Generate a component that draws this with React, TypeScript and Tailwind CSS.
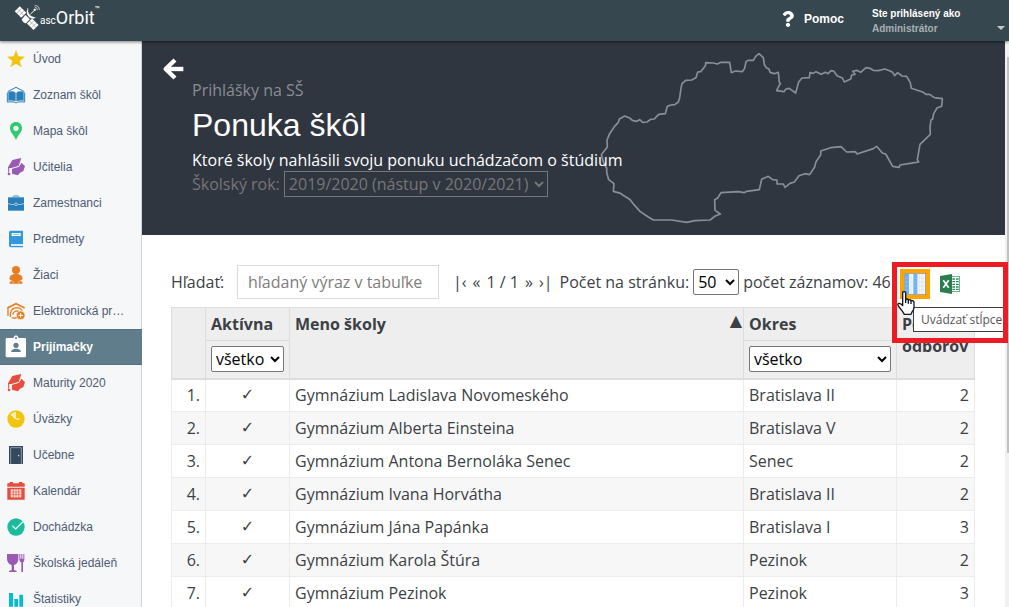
import { useState } from "react";
import type { ReactNode } from "react";
import clsx from "clsx";
import { FaQuestion } from "react-icons/fa";

interface MenuItem {
  label: string;
  icon: ReactNode;
  active?: boolean;
}

interface School {
  name: string;
  district: string;
  count: number;
}

function GradCap({ color }: { color: string }) {
  return (
    <g>
      <path d="M3 28L16 6L43 0L35 24L14 30L3 31Z" fill={color} />
      <path d="M15 32L36 26L43 14L54 24L49 39L38 45L33 52L15 47Z" fill={color} />
      <path d="M15 31L36 25L42 13" fill="none" stroke="#f5f7f9" strokeOpacity="0.7" strokeWidth="2" />
      <path d="M5 28V44" stroke={color} strokeWidth="3" />
      <circle cx="6" cy="48" r="4" fill={color} />
    </g>
  );
}

const MENU: MenuItem[] = [
  {
    label: "Úvod",
    icon: <path d="M27 0L34 19L54 20L38 33L44 52L27 41L10 52L16 33L0 20L20 19Z" fill="#f1c40f" />,
  },
  {
    label: "Zoznam škôl",
    icon: (
      <g>
        <path d="M2 17L27 4L52 17" fill="none" stroke="#2980b9" strokeWidth="3" />
        <path d="M4 18Q16 13 26 20V45Q15 42 4 44ZM28 20Q38 13 50 18V44Q39 42 28 45Z" fill="#2980b9" />
        <path d="M1 20V48Q14 47 22 48L27 51L32 48Q40 47 53 48V20" fill="none" stroke="#2980b9" strokeWidth="3" />
      </g>
    ),
  },
  {
    label: "Mapa škôl",
    icon: (
      <path
        fillRule="evenodd"
        fill="#2ecc71"
        d="M27 0C16 0 9 8 9 18C9 31 20 37 27 54C34 37 45 31 45 18C45 8 38 0 27 0ZM27 11A8 8 0 1 1 27 27A8 8 0 1 1 27 11Z"
      />
    ),
  },
  { label: "Učitelia", icon: <GradCap color="#9b59b6" /> },
  {
    label: "Zamestnanci",
    icon: (
      <g>
        <path d="M18 10Q18 6 22 6H32Q36 6 36 10" fill="none" stroke="#2980b9" strokeWidth="3" />
        <rect x="3" y="10" width="48" height="40" fill="#2980b9" />
        <path d="M3 29Q15 33 24 31M30 31Q40 33 51 29" fill="none" stroke="#d9e9f4" strokeWidth="2" />
        <circle cx="27" cy="31" r="4" fill="#2980b9" stroke="#d9e9f4" strokeWidth="2" />
      </g>
    ),
  },
  {
    label: "Predmety",
    icon: (
      <g>
        <path d="M11 2H48V42H12V48H48V52H11Q6 51 6 46V7Q6 2 11 2Z" fill="#3498db" />
        <rect x="14" y="9" width="27" height="9" fill="#fff" />
        <path d="M17 13H38" stroke="#8fc6ec" strokeWidth="3" />
        <rect x="12" y="42" width="35" height="6" fill="#d6eaf8" />
      </g>
    ),
  },
  {
    label: "Žiaci",
    icon: (
      <g fill="#e67e22">
        <circle cx="27" cy="12" r="12" />
        <path d="M10 29Q27 18 44 29L47 38Q44 44 37 43L46 48V53H8V48L17 43Q9 44 7 38Z" />
        <path d="M15 48H22M32 48H39" stroke="#f9d9ba" strokeWidth="2" />
      </g>
    ),
  },
  {
    label: "Elektronická pr…",
    icon: (
      <g fill="none" stroke="#e67e22" strokeWidth="4">
        <path d="M1 18L27 5L53 18" strokeWidth="5" />
        <path d="M3 18V42M10 45Q8 20 27 17Q42 17 45 27" />
        <path d="M14 47Q22 50 30 46M17 38Q20 24 36 28" />
        <circle cx="41" cy="40" r="13" fill="#e67e22" stroke="#f5f7f9" strokeWidth="2" />
        <path d="M41 33V47M34 40H48" stroke="#fff" strokeWidth="3" />
      </g>
    ),
  },
  {
    label: "Prijímačky",
    active: true,
    icon: (
      <g>
        <path d="M0 0H19Q22 -8 27 -8T35 0H54Q57 0 57 4V54Q57 58 53 58H1Q-4 58 -4 54V4Q-4 0 0 0Z" fill="#fff" />
        <circle cx="27" cy="0" r="3" fill="#607d8b" />
        <circle cx="27" cy="22" r="8" fill="#607d8b" />
        <path d="M12 42Q14 32 27 32T42 42Z" fill="#607d8b" />
      </g>
    ),
  },
  { label: "Maturity 2020", icon: <GradCap color="#e74c3c" /> },
  {
    label: "Úväzky",
    icon: (
      <g>
        <circle cx="27" cy="27" r="26" fill="#f1c40f" />
        <path d="M27 27V5A22 22 0 0 0 10 15Z" fill="#fbeeb5" />
        <path d="M18 20L27 27H38" fill="none" stroke="#fff" strokeWidth="3" />
      </g>
    ),
  },
  {
    label: "Učebne",
    icon: (
      <g>
        <rect x="6" y="0" width="42" height="54" fill="#34495e" />
        <path d="M11 54V5H43V54" fill="none" stroke="#b4bdc6" strokeWidth="2" />
        <circle cx="35" cy="29" r="2" fill="#fff" />
      </g>
    ),
  },
  {
    label: "Kalendár",
    icon: (
      <g fill="#e74c3c">
        <path d="M1 4H53V14H1ZM1 17H53V53H1Z" />
        <path d="M8 0H18V8H8ZM36 0H46V8H36Z" />
        <path d="M11 22H43V46H11Z" fill="#fbe3e0" />
        <path d="M11 30H43M11 38H43M19 22V46M27 22V46M35 22V46" stroke="#e74c3c" strokeWidth="2" />
      </g>
    ),
  },
  {
    label: "Dochádzka",
    icon: (
      <g>
        <circle cx="27" cy="27" r="26" fill="#1abc9c" />
        <path d="M16 23L26 33L53 6" fill="none" stroke="#d5f5ee" strokeWidth="4" />
      </g>
    ),
  },
  {
    label: "Školská jedáleň",
    icon: (
      <g fill="#9b59b6">
        <path d="M0 0H34V16Q33 30 21 33V48L29 51V54H6V51L14 48V33Q1 30 0 16Z" />
        <path d="M37 0H40V14H43V0H46V14H49V0H52V17Q52 23 48 25V54H43V25Q37 23 37 17Z" />
      </g>
    ),
  },
  {
    label: "Štatistiky",
    icon: <path d="M6 9H18V50H6ZM22 27H33V50H22ZM37 14H48V50H37Z" fill="#00bcd4" />,
  },
];

const SCHOOLS: School[] = [
  { name: "Gymnázium Ladislava Novomeského", district: "Bratislava II", count: 2 },
  { name: "Gymnázium Alberta Einsteina", district: "Bratislava V", count: 2 },
  { name: "Gymnázium Antona Bernoláka Senec", district: "Senec", count: 2 },
  { name: "Gymnázium Ivana Horvátha", district: "Bratislava II", count: 2 },
  { name: "Gymnázium Jána Papánka", district: "Bratislava I", count: 3 },
  { name: "Gymnázium Karola Štúra", district: "Pezinok", count: 2 },
  { name: "Gymnázium Pezinok", district: "Pezinok", count: 3 },
];

function Logo() {
  return (
    <a href="#" aria-label="ascOrbit" className="flex items-center pb-[6px] font-[Roboto,sans-serif] text-white">
      <svg viewBox="0 0 76 78" className="h-[26px] w-[25px]" fill="none" stroke="#fff">
        <g transform="rotate(45 16 20)">
          <rect x="3" y="9" width="28" height="22" fill="#fff" stroke="none" />
          <path d="M3 20H31M12 9V31M22 9V31" stroke="#37474f" strokeWidth="1" />
        </g>
        <g transform="rotate(45 54 58)">
          <rect x="40" y="47" width="28" height="22" fill="#fff" stroke="none" />
          <path d="M40 58H68M49 47V69M59 47V69" stroke="#37474f" strokeWidth="1" />
        </g>
        <path d="M21 43L32 30L45 43L33 55Q24 54 21 43Z" fill="#fff" />
        <path d="M39 9Q37 33 62 38Q56 43 46 38Q31 27 39 9Z" fill="#fff" />
        <path d="M47 27L60 15" strokeWidth="3" />
        <circle cx="60" cy="14" r="3" fill="#fff" />
        <path d="M60 6Q68 6 68 15M60 1Q74 1 74 15" strokeWidth="2" />
      </svg>
      <span className="flex items-baseline">
        <span className="text-[10px]">asc</span>
        <span className="text-lg">Orbit</span>
      </span>
      <span className="self-start text-[8px] leading-3">™</span>
    </a>
  );
}

function TopBar() {
  return (
    <header className="relative z-10 flex h-[41px] shrink-0 items-center justify-between bg-[#37474f] pl-[15px] pr-1 shadow-[0_1px_3px_rgba(0,0,0,0.5)]">
      <Logo />
      <div className="flex h-full items-center font-['Liberation_Sans',sans-serif] font-bold text-white">
        <a href="#" className="flex items-center gap-2 pb-1 text-xs">
          <FaQuestion className="size-4" />
          Pomoc
        </a>
        <button type="button" className="ml-7 flex h-full w-[133px] justify-between pt-[6px] text-left text-[10px] leading-[15px]">
          <span>
            Ste prihlásený ako
            <span className="block text-[#a6afb3]">Administrátor</span>
          </span>
          <svg viewBox="0 0 8 4" className="mt-5 h-1 w-2 fill-[#c3c8ca]">
            <path d="M0 0H8L4 4Z" />
          </svg>
        </button>
      </div>
    </header>
  );
}

function Sidebar() {
  return (
    <nav className="w-[142px] shrink-0 border-r border-[#cfd3d6] bg-[#f5f7f9] font-['Liberation_Sans',sans-serif] text-xs text-[#4e5b73]">
      {MENU.map((item) => (
        <a
          key={item.label}
          href="#"
          className={clsx(
            "flex h-9 items-center gap-2 pl-[7px] whitespace-nowrap",
            item.active && "-mr-px border-y border-[#557280] bg-[#607d8b] font-bold text-white"
          )}
        >
          <svg viewBox="0 0 54 54" className="size-[18px] shrink-0 overflow-visible">
            {item.icon}
          </svg>
          {item.label}
        </a>
      ))}
    </nav>
  );
}

// Outline of Slovakia
function CountryMap() {
  return (
    <svg
      viewBox="60 30 1041 531"
      className="absolute top-[9px] right-[58px] h-[177px] w-[347px]"
      fill="none"
      stroke="#8a8e96"
      strokeWidth="5"
      strokeLinejoin="round"
    >
      <path d="M134 228L149 234L157 241L170 244L179 239L188 247L201 246L212 238L223 237L236 223L256 221L262 199L273 195L284 194L295 186L299 173L303 145L306 131L317 121L335 120L348 113L353 96L362 95L377 76V68L400 69L412 72L423 67L449 67L454 98L466 93L487 95L494 85L498 65L504 61L520 61L527 49L537 41L550 53L553 74L560 84L567 87L570 97L583 101L595 97L598 127L601 131L597 137L590 152L612 155L618 147L628 145L647 159L656 126L666 114L688 113L690 98L700 100L708 95L724 103L736 97L744 101L753 92L761 93L771 107L787 114L793 126L812 117L815 105L825 103L818 94L830 91L842 97L858 83L870 85L880 91L895 92L915 87L930 93L937 96L944 107L953 98L966 108L980 109L991 128L994 145L1030 157L1038 163L1049 163L1063 173L1087 176L1085 199L1071 204L1061 221L1058 237L1053 240L1050 262L1051 283L1020 313L1012 359L1016 366L990 370L960 375L957 382L938 379L917 342L907 339L890 319L880 326L831 342L826 335L800 336L783 320L752 323L722 333V345L708 365L704 381L689 404L675 401L657 407L643 426L630 430L615 442L610 432L591 432V420L578 419L565 409L545 418L538 449L500 454L492 458L475 455L423 458L413 474L404 479L405 511L421 522L406 528L390 540L345 542L320 547L275 540L220 540L205 531L180 514L162 494L149 478L128 465L122 460L100 454L102 431L86 419L80 397V384L73 375L64 344L82 321L81 300L89 281L103 260L115 247L118 237Z" />
    </svg>
  );
}

function Hero() {
  return (
    <section className="relative flex min-h-[194px] bg-[#2f3640] pl-5 leading-6 text-[#8a8d93]">
      <CountryMap />
      <a href="#" aria-label="Späť" className="w-[30px] shrink-0 pt-[17px] text-white">
        <svg viewBox="0 0 66 66" className="size-[22px]" fill="none" stroke="currentColor" strokeWidth="13">
          <path d="M39 6L11 33L39 60" strokeLinejoin="round" />
          <path d="M12 33H64" />
        </svg>
      </a>
      <div className="relative pt-[37px]">
        <p>Prihlášky na SŠ</p>
        <h1 className="font-['Liberation_Sans',sans-serif] text-[32px] leading-[46px] text-white">Ponuka škôl</h1>
        <p className="text-white">Ktoré školy nahlásili svoju ponuku uchádzačom o štúdium</p>
        <div className="flex h-6 items-center gap-1 text-[#767676]">
          <label htmlFor="year">Školský rok:</label>
          <select id="year" className="h-[26px] w-[264px] border border-[#767676] bg-[#2f3640]">
            <option>2019/2020 (nástup v 2020/2021)</option>
          </select>
        </div>
      </div>
    </section>
  );
}

function ColumnsIcon() {
  return (
    <svg viewBox="0 0 66 66" className="size-[22px]">
      <rect x="1" y="1" width="64" height="64" fill="#f4f4f4" stroke="#9a9a9a" strokeWidth="3" />
      <path d="M3 3H15V63H3ZM28 3H40V63H28Z" fill="#66b2ff" />
      <path d="M3 15H63M3 27H63M3 39H63M3 51H63M21 3V63M46 3V63M54 3V63" stroke="#c9d6e2" strokeWidth="1" />
    </svg>
  );
}

function ExcelIcon() {
  return (
    <svg viewBox="0 0 60 60" className="size-5">
      <rect x="33" y="8" width="26" height="44" fill="#fff" stroke="#2b8a57" strokeWidth="2" />
      <path d="M37 15H45M48 15H56M37 23H45M48 23H56M37 31H45M48 31H56M37 39H45M48 39H56M37 46H45M48 46H56" stroke="#2b8a57" strokeWidth="4" />
      <path d="M0 6L36 0V60L0 54Z" fill="#2b7d4f" />
      <path d="M10 19L26 41M26 19L10 41" stroke="#fff" strokeWidth="5" />
    </svg>
  );
}

// Export buttons, with the hint callout drawn over them
function TableTools() {
  return (
    <div className="relative flex shrink-0 items-center gap-[10px]">
      <button type="button" aria-label="Uvádzať stĺpce" className="flex size-[30px] items-center justify-center bg-[#ffa500]">
        <ColumnsIcon />
      </button>
      <button type="button" aria-label="Export do Excelu">
        <ExcelIcon />
      </button>
      <div className="absolute -top-[7px] -left-2 h-[81px] w-[116px] border-5 border-[#ed1c24]">
        <div
          role="tooltip"
          className="mt-10 ml-4 h-[25px] border border-r-0 border-[#3c3c3c] bg-white pl-[7px] text-xs leading-6 whitespace-nowrap text-[#575757]"
        >
          Uvádzať stĺpce
        </div>
      </div>
      <svg viewBox="0 0 54 72" className="absolute top-[22px] -left-[3px] h-6 w-[18px]">
        <path
          d="M17 4Q22 -1 26 5V25Q31 22 34 27Q39 24 42 29Q48 27 51 33V50Q50 58 45 63L42 70H22L17 62L4 45Q0 37 7 37Q13 38 17 44Z"
          fill="#fff"
          stroke="#111827"
          strokeWidth="4"
          strokeLinejoin="round"
        />
        <path d="M26 25V36M34 27V38M42 29V39" stroke="#111827" strokeWidth="4" />
      </svg>
    </div>
  );
}

function Toolbar({ query, onQuery }: { query: string; onQuery: (value: string) => void }) {
  return (
    <div className="flex h-[34px] items-center whitespace-nowrap">
      <label htmlFor="search" className="w-[66px] shrink-0">
        Hľadať:
      </label>
      <input
        id="search"
        value={query}
        onChange={(e) => onQuery(e.target.value)}
        placeholder="hľadaný výraz v tabuľke"
        className="h-[34px] w-[202px] shrink-0 border border-[#dcdcdc] px-[10px] placeholder:text-[#7d7d7d]"
      />
      <div className="ml-[14px] flex shrink-0 items-center gap-[6px]">
        <button type="button" aria-label="Prvá strana">|‹</button>
        <button type="button" aria-label="Predošlá strana">«</button>
        <span>1 / 1</span>
        <button type="button" aria-label="Ďalšia strana">»</button>
        <button type="button" aria-label="Posledná strana">›|</button>
      </div>
      <label htmlFor="page-size" className="ml-[7px] shrink-0">
        Počet na stránku:
      </label>
      <select id="page-size" className="mx-1 h-[26px] w-[46px] shrink-0 rounded-xs border border-[#767676] bg-white text-black">
        <option>50</option>
      </select>
      <span className="mr-auto">počet záznamov: 46</span>
      <div className="w-[75px] shrink-0 self-end">
        <TableTools />
      </div>
    </div>
  );
}

function SchoolsTable({ rows }: { rows: School[] }) {
  const head = "border border-[#ddd] px-[5px] text-left align-top leading-[22px] font-bold";
  const cell = "border border-[#ececec] px-[5px]";

  return (
    <table className="mt-2 w-full table-fixed border-collapse">
      <colgroup>
        <col className="w-[34px]" />
        <col className="w-[84px]" />
        <col />
        <col className="w-[153px]" />
        <col className="w-[78px]" />
      </colgroup>
      <thead className="border-b-2 border-[#ddd] bg-[#eee]">
        <tr className="h-[33px]">
          <th rowSpan={2} className={head} />
          <th className={clsx(head, "pt-[5px]")}>Aktívna</th>
          <th rowSpan={2} className={clsx(head, "pt-[5px]")}>
            <div className="flex justify-between">
              Meno školy
              <span className="-mr-1 font-['DejaVu_Sans',sans-serif] leading-4 font-normal">▲</span>
            </div>
          </th>
          <th className={clsx(head, "pt-[5px]")}>Okres</th>
          <th rowSpan={2} className={clsx(head, "pt-[5px]")}>
            Počet odborov
          </th>
        </tr>
        <tr className="h-[38px]">
          <th className={clsx(head, "pt-[5px]")}>
            <select aria-label="Aktívna" className="block h-[26px] w-full rounded-xs border border-[#767676] bg-white font-normal text-black">
              <option>všetko</option>
            </select>
          </th>
          <th className={clsx(head, "pt-[5px]")}>
            <select aria-label="Okres" className="block h-[26px] w-full rounded-xs border border-[#767676] bg-white font-normal text-black">
              <option>všetko</option>
            </select>
          </th>
        </tr>
      </thead>
      <tbody>
        {rows.map((school, i) => (
          <tr key={school.name} className="h-[33px] even:bg-[#f7f7f7]">
            <td className={clsx(cell, "text-right")}>{i + 1}.</td>
            <td className={clsx(cell, "text-center font-['DejaVu_Sans',sans-serif] font-bold")}>✓</td>
            <td className={cell}>{school.name}</td>
            <td className={cell}>{school.district}</td>
            <td className={clsx(cell, "text-right")}>{school.count}</td>
          </tr>
        ))}
      </tbody>
    </table>
  );
}

export default function App() {
  const [query, setQuery] = useState("");
  const rows = SCHOOLS.filter((s) => s.name.toLowerCase().includes(query.toLowerCase()));

  return (
    <div className="flex h-screen flex-col overflow-hidden bg-white font-['Open_Sans',sans-serif] text-base text-[#3c3f45]">
      <TopBar />
      <div className="flex min-h-0 flex-1">
        <Sidebar />
        <main className="min-w-0 flex-1">
          <Hero />
          <div className="pt-[30px] pr-[30px] pl-[29px]">
            <Toolbar query={query} onQuery={setQuery} />
            <SchoolsTable rows={rows} />
          </div>
        </main>
        <div className="w-1 shrink-0 bg-[#f1f1f1] pt-4 pl-[2px]">
          <div className="h-[72%] bg-[#c1c1c1]" />
        </div>
      </div>
    </div>
  );
}
